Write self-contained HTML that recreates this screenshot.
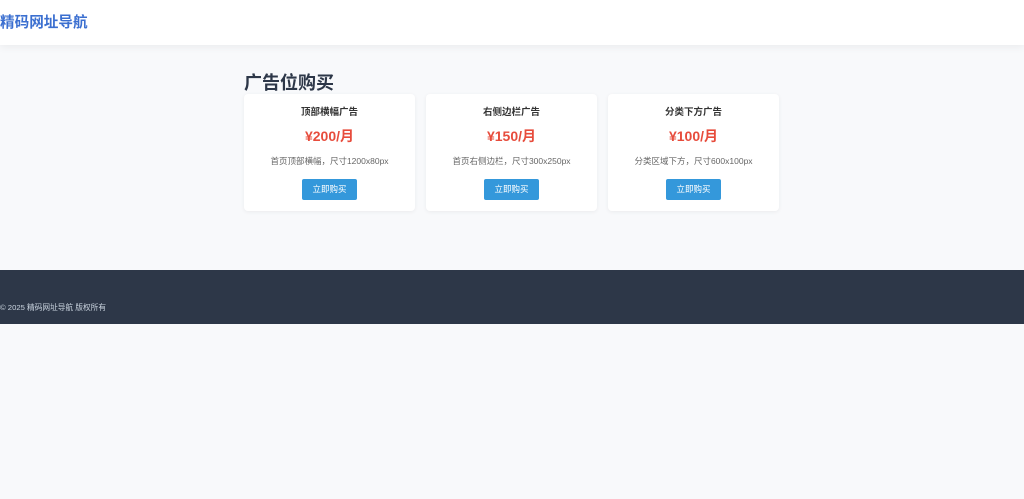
<!DOCTYPE html>
<html><head><meta charset="utf-8"><style>
*{margin:0;padding:0;box-sizing:border-box}
body{width:1024px;height:499px;background:#f8f9fb;font-family:"Liberation Sans","Noto Sans CJK SC",sans-serif;position:relative;overflow:hidden}
.hdr{position:absolute;left:0;top:0;width:1024px;height:45px;background:#fff;box-shadow:0 2px 8px rgba(0,0,0,.06)}
.logo{position:absolute;left:0;top:13px;font-size:14.6px;font-weight:bold;color:#3b6fd0;line-height:20px}
h2{position:absolute;left:244px;top:71px;font-size:18px;color:#2d3748;line-height:24px}
.card{position:absolute;top:94px;width:171px;height:117px;background:#fff;border-radius:4px;box-shadow:0 1px 4px rgba(0,0,0,.06);text-align:center}
.t{position:absolute;top:13px;width:100%;font-size:9.5px;font-weight:bold;color:#333;line-height:12px}
.p{position:absolute;top:33px;width:100%;font-size:14px;font-weight:bold;color:#e74c3c;line-height:18px}
.d{position:absolute;top:61px;width:100%;font-size:8.5px;color:#666;line-height:12px}
.b{position:absolute;top:85px;left:58px;width:55px;height:21px;background:#3498db;border-radius:2px;color:#fff;font-size:8.5px;line-height:21px}
.ft{position:absolute;left:0;top:270px;width:1024px;height:54px;background:#2d3748}
.ft span{position:absolute;left:0;top:33px;font-size:7.7px;color:#cbd5e0;line-height:10px}
</style></head><body>
<div class="hdr"><div class="logo">精码网址导航</div></div>
<h2>广告位购买</h2>
<div class="card" style="left:244px"><div class="t">顶部横幅广告</div><div class="p">¥200/月</div><div class="d">首页顶部横幅，尺寸1200x80px</div><div class="b">立即购买</div></div>
<div class="card" style="left:426px"><div class="t">右侧边栏广告</div><div class="p">¥150/月</div><div class="d">首页右侧边栏，尺寸300x250px</div><div class="b">立即购买</div></div>
<div class="card" style="left:608px"><div class="t">分类下方广告</div><div class="p">¥100/月</div><div class="d">分类区域下方，尺寸600x100px</div><div class="b">立即购买</div></div>
<div class="ft"><span>© 2025 精码网址导航 版权所有</span></div>
</body></html>
